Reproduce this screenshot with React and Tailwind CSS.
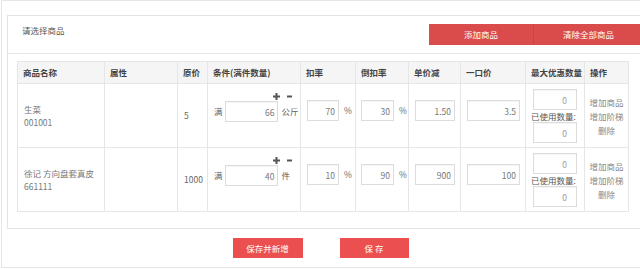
import React from 'react';

const rows = [
  {
    id: 1,
    name: '生菜',
    code: '001001',
    price: '5',
    qty: '66',
    unit: '公斤',
    rate: '70',
    backRate: '30',
    minus: '1.50',
    fixed: '3.5',
  },
  {
    id: 2,
    name: '徐记 方向盘套真皮',
    code: '661111',
    price: '1000',
    qty: '40',
    unit: '件',
    rate: '10',
    backRate: '90',
    minus: '900',
    fixed: '100',
  },
];

const headers = ['商品名称', '属性', '原价', '条件(满件数量)', '扣率', '倒扣率', '单价减', '一口价', '最大优惠数量', '操作'];

function Box({ value, className }) {
  return (
    <input
      readOnly
      value={value}
      className={
        'h-[21px] shrink-0 border border-[#dcdcdc] bg-white text-right text-[#777] outline-none shadow-[inset_0_1px_1px_rgba(0,0,0,0.04)] ' +
        className
      }
    />
  );
}

function PlusMinus() {
  return (
    <div className="flex h-[10px] items-center justify-end gap-[7px] pr-[8px]">
      <svg width="7" height="7" viewBox="0 0 7 7">
        <path d="M0 3.5H7M3.5 0V7" stroke="#555" strokeWidth="2" />
      </svg>
      <svg width="5" height="7" viewBox="0 0 5 7">
        <path d="M0 3.5H5" stroke="#555" strokeWidth="2" />
      </svg>
    </div>
  );
}

function Row({ row }) {
  const cell = 'border border-[#e6e6e6] p-0';
  return (
    <tr className="h-[64px]">
      <td className={cell + ' align-middle pl-[6px] text-[#777] leading-[13px]'}>
        <div>{row.name}</div>
        <div>{row.code}</div>
      </td>
      <td className={cell}></td>
      <td className={cell + ' align-middle pl-[6px] text-[#666]'}>{row.price}</td>
      <td className={cell + ' align-top pt-[7px] pl-[6px] text-[#666]'}>
        <PlusMinus />
        <div className="flex h-[21px] items-center whitespace-nowrap">
          <span>满</span>
          <Box value={row.qty} className="ml-[2px] w-[53px] pr-[2px]" />
          <span className="ml-[4px]">{row.unit}</span>
        </div>
      </td>
      <td className={cell + ' align-top pt-[16px] pl-[6px] text-[#666]'}>
        <div className="flex h-[21px] items-center">
          <Box value={row.rate} className="w-[32px] pr-[3px]" />
          <span className="ml-[5px]">%</span>
        </div>
      </td>
      <td className={cell + ' align-top pt-[16px] pl-[5px] text-[#666]'}>
        <div className="flex h-[21px] items-center">
          <Box value={row.backRate} className="w-[33px] pr-[3px]" />
          <span className="ml-[5px]">%</span>
        </div>
      </td>
      <td className={cell + ' align-top pt-[16px] pl-[6px]'}>
        <Box value={row.minus} className="w-[40px] pr-[3px]" />
      </td>
      <td className={cell + ' align-top pt-[16px] pl-[6px]'}>
        <Box value={row.fixed} className="w-[53px] pr-[3px]" />
      </td>
      <td className={cell + ' align-top pt-[5px] pl-[5px] text-[#555]'}>
        <Box value="0" className="ml-[2px] block h-[20px] w-[44px] pr-[9px] text-[#999]" />
        <div className="leading-[12px] whitespace-nowrap">已使用数量:</div>
        <Box value="0" className="ml-[2px] block h-[20px] w-[44px] pr-[9px] text-[#999]" />
      </td>
      <td className={cell + ' align-middle text-center leading-[14px] text-[#888]'}>
        <div>增加商品</div>
        <div>增加阶梯</div>
        <div>删除</div>
      </td>
    </tr>
  );
}

export default function App() {
  return (
    <div className="w-[640px] overflow-hidden bg-white font-['Noto_Sans_CJK_SC','Liberation_Sans',sans-serif] text-[8.5px]">
      <div className="ml-[1px] w-[660px] border border-[#e6e6e6] pl-[5px] pt-[14px] pb-[9px]">
        <div className="w-[637px] border border-[#e3e3e3]">
          <div className="flex items-start justify-between border-b border-[#e6e6e6] pl-[14px] pt-[8px] pb-[8px]">
            <div className="leading-[12px] text-[#555]">请选择商品</div>
            <div className="flex h-[21px] bg-[#da4b4b] text-white">
              <div className="flex w-[105px] items-center justify-center border-r border-[#c94444]">添加商品</div>
              <div className="flex w-[109px] items-center justify-center">清除全部商品</div>
            </div>
          </div>
          <div className="pl-[9px] pt-[7px] pb-[16px]">
            <table className="w-[611px] table-fixed border-collapse">
              <colgroup>
                <col className="w-[87px]" />
                <col className="w-[73px]" />
                <col className="w-[30px]" />
                <col className="w-[93px]" />
                <col className="w-[55px]" />
                <col className="w-[53px]" />
                <col className="w-[52px]" />
                <col className="w-[65px]" />
                <col className="w-[59px]" />
                <col className="w-[44px]" />
              </colgroup>
              <thead>
                <tr className="h-[22px] bg-[#f5f5f5]">
                  {headers.map((h) => (
                    <th
                      key={h}
                      className="border border-[#e6e6e6] px-[5px] text-left font-bold whitespace-nowrap text-[#444]"
                    >
                      {h}
                    </th>
                  ))}
                </tr>
              </thead>
              <tbody>
                {rows.map((row) => (
                  <Row key={row.id} row={row} />
                ))}
              </tbody>
            </table>
          </div>
        </div>
        <div className="mt-[9px] flex justify-center gap-[37px] pr-[26px]">
          <div className="flex h-[20px] w-[70px] items-center justify-center bg-[#eb4f4f] text-white">保存并新增</div>
          <div className="flex h-[20px] w-[69px] items-center justify-center bg-[#eb4f4f] text-white">保 存</div>
        </div>
      </div>
    </div>
  );
}
